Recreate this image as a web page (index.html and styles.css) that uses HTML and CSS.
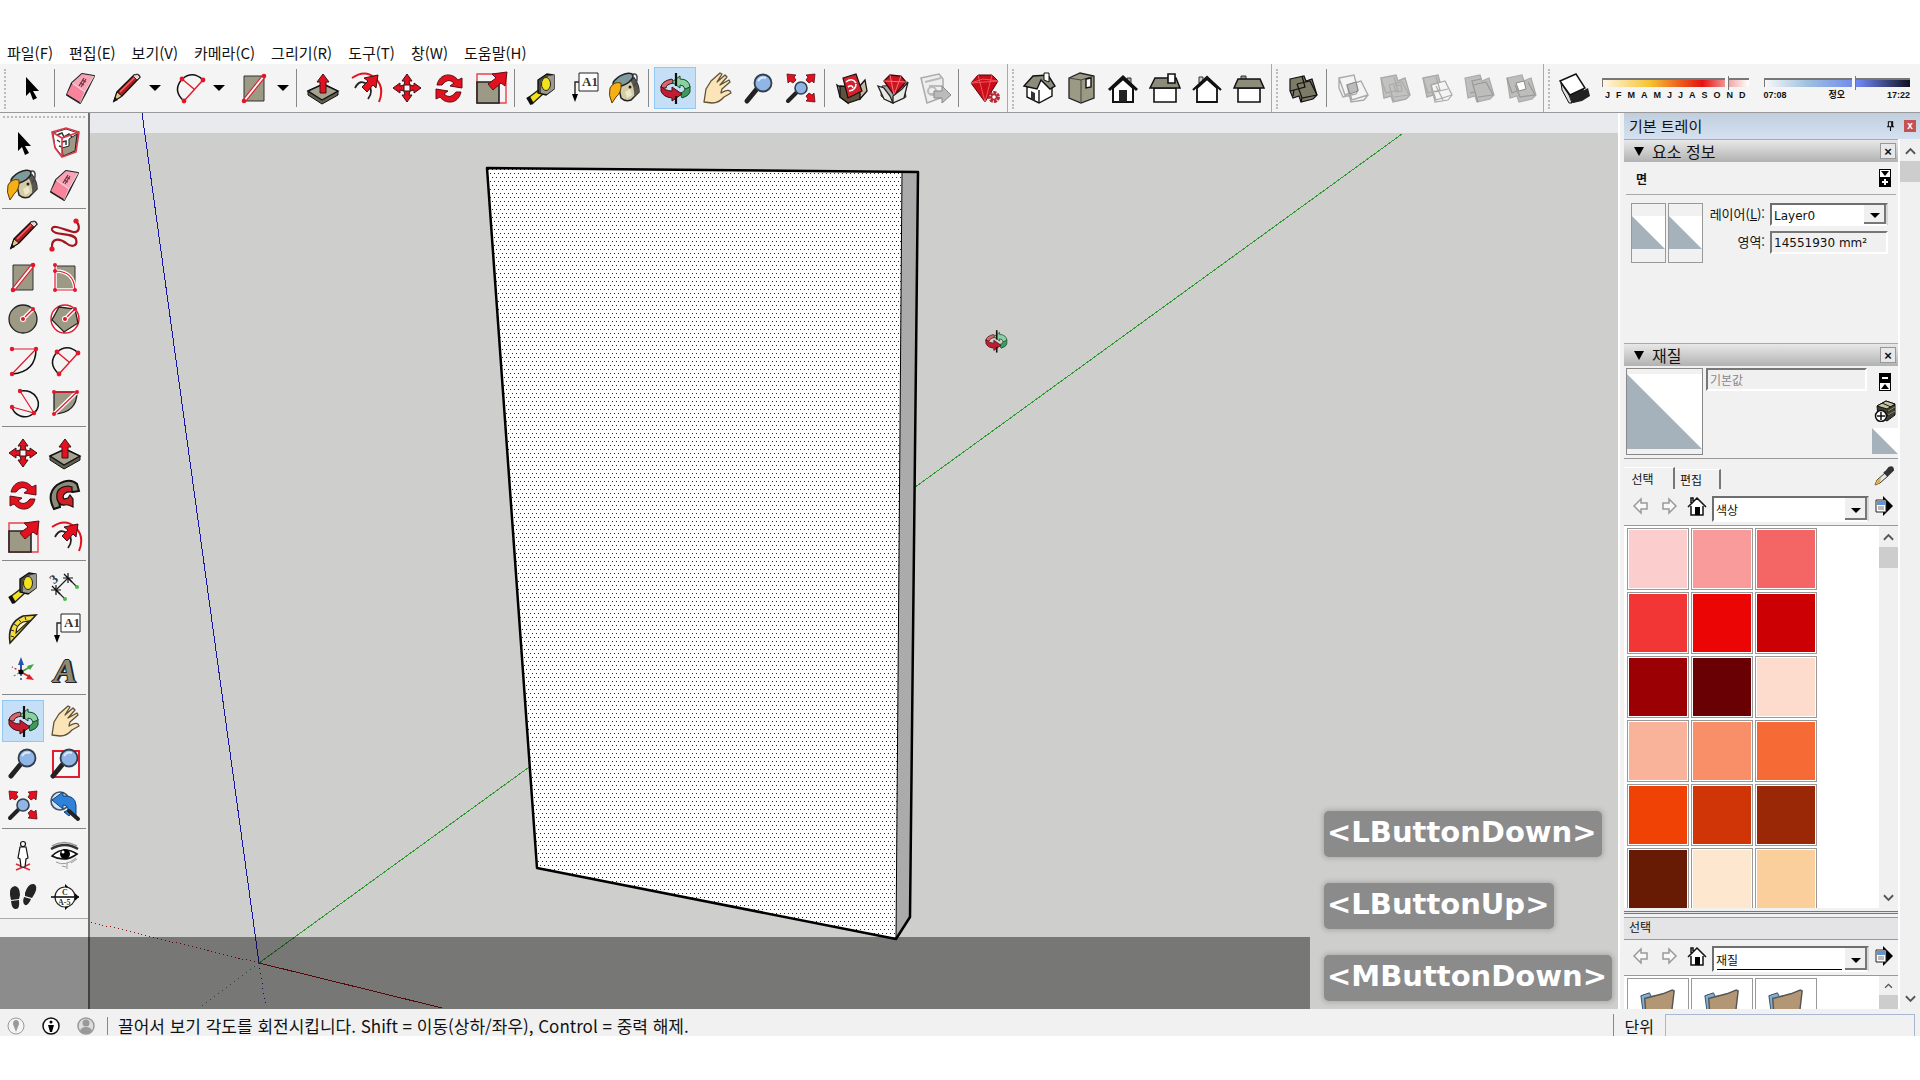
FILE: index.html
```html
<!DOCTYPE html>
<html lang="ko">
<head>
    <meta charset="UTF-8">
    <meta name="viewport" content="width=device-width, initial-scale=1.0">
    <title>SketchUp</title>
    <link rel="stylesheet" href="styles.css">
</head>
<body>

<!-- アイコン定義 -->
<svg class="icon-defs" aria-hidden="true">
    <symbol id="i-select" viewBox="0 0 36 36"><path d="M13 7v19l4-4 3 8 4-2-4-7h6z" fill="#000"/></symbol>
    <symbol id="i-component" viewBox="0 0 36 36">
        <path d="M6 8l13-4 12 4-3 18-13 5-7-9z" fill="#fff" stroke="#333"/><path d="M22 14l8-5-2 17-12 5-1-8 7-2z" fill="#9c9a84" stroke="#222"/>
        <path d="M10 10l5-2 2 4 5-3 3 3M10 15l3 2M12 21l3 1M15 17l4-1v4" stroke="#333" stroke-width="1.5" fill="none"/>
        <path d="M5 7l14-4 13 4-3 20-14 5-7-9zM5 7l10 6 17-6M15 13v19" fill="none" stroke="#d83a48" stroke-width="1.6"/>
    </symbol>
    <symbol id="i-paint" viewBox="0 0 36 36">
        <path d="M11 14L27 8q5 7 5 14l-8 8q-6 2-10-2z" fill="#d3cca9" stroke="#222" stroke-width="1.5"/>
        <path d="M23 10l4-2q5 7 5 14l-5 5q1-9-4-17z" fill="#5a584c"/>
        <path d="M18 22l5-3 2 6-5 3z" fill="#eee8c6"/>
        <path d="M23 8c2-6 8-5 7 1q0 4-3 7" fill="none" stroke="#445" stroke-width="1.5"/>
        <ellipse cx="16" cy="10" rx="11" ry="5" transform="rotate(-28 16 10)" fill="#7d9a9c" stroke="#222" stroke-width="1.5"/>
        <path d="M3 18q4-7 11-5 1 9-5 14l-4 6q-4-8-2-15z" fill="#f6b016" stroke="#5a3d00"/><circle cx="23" cy="17" r="1.500" fill="#222"/>
    </symbol>
    <symbol id="i-eraser" viewBox="0 0 36 36">
        <path d="M4 25L9 13 19 4l12 2-9 18-5 9z" fill="#f4869c" stroke="#222" stroke-width="2" stroke-linejoin="round"/>
        <path d="M9 13L19 4l12 2-9 16z" fill="#f7a5b6"/><path d="M4 24l5-10 13 8-5 10z" fill="#f8849c"/><path d="M9 13l13 9 9-16M22 22l-5 11" fill="none" stroke="#fff" stroke-opacity=".7"/>
        <path d="M16 16l5-8M18 17l5-8M17 13l4 2M19 10l4 2" stroke="#70303f" stroke-width="1.2" fill="none"/>
    </symbol>
    <symbol id="i-pencil" viewBox="0 0 36 36">
        <path d="M6 31l3-9L26 5q4-2 6 2L14 26z" fill="#bd1820" stroke="#111" stroke-width="1.4"/><path d="M12 22L27 7" stroke="#ef6b62" stroke-width="1.5"/>
        <path d="M6 31l3-9 5 4z" fill="#dfc58e" stroke="#111"/><path d="M5 32l2-5 3 3z" fill="#111"/><path d="M26 5q4-2 6 2l-3 3-4-4z" fill="#ead6d6" stroke="#333"/>
    </symbol>
    <symbol id="i-freehand" viewBox="0 0 36 36"><path d="M29 4c5 6 3 12-3 11C18 13 4 6 5 13c2 6 21 2 24 9 2 7-4 9-10 4C12 21 4 21 5 31" fill="none" stroke="#a3171f" stroke-width="2.2"/><circle cx="29" cy="4" r="2.6" fill="#e0182a"/><circle cx="5" cy="32" r="2.6" fill="#e0182a"/></symbol>
    <symbol id="i-rect" viewBox="0 0 36 36"><path d="M8 6h20v25H8z" fill="#9c9a84" stroke="#333"/><path d="M8 31L28 6" stroke="#e0182a" stroke-width="4"/><path d="M28 6L8 31" stroke="#fff" stroke-width="2"/><circle cx="28" cy="6" r="2.3" fill="#e0182a"/><circle cx="8" cy="31" r="2.3" fill="#e0182a"/></symbol>
    <symbol id="i-rrect" viewBox="0 0 36 36"><path d="M8 7h20v24H8z" fill="#9c9a84" stroke="#333"/><path d="M8 31V6M8 12q19 0 20 19H8" fill="none" stroke="#fff" stroke-width="3.500"/><path d="M8 31V6M8 12q19 0 20 19H8" fill="none" stroke="#e0182a" stroke-width="1.2"/><g fill="#e0182a"><circle cx="8" cy="6" r="2"/><circle cx="8" cy="12" r="2"/><circle cx="8" cy="31" r="2"/><circle cx="28" cy="31" r="2"/></g></symbol>
    <symbol id="i-circle" viewBox="0 0 36 36"><circle cx="18" cy="18" r="14" fill="#9c9a84" stroke="#222" stroke-width="1.3"/><path d="M18 18l10-10" stroke="#fff" stroke-width="4"/><path d="M18 18l10-10" stroke="#e0182a" stroke-width="1.4"/><circle cx="18" cy="18" r="3" fill="#fff"/><circle cx="18" cy="18" r="2" fill="#e0182a"/><circle cx="28" cy="8" r="2" fill="#e0182a"/></symbol>
    <symbol id="i-polygon" viewBox="0 0 36 36"><circle cx="18" cy="18" r="14" fill="#fff" stroke="#e0182a" stroke-width="1.4"/><path d="M12 6l16 2 3 14-14 9L5 19z" fill="#9c9a84" stroke="#222" stroke-width="1.3"/><path d="M18 18l10-10" stroke="#fff" stroke-width="4"/><path d="M18 18l10-10" stroke="#e0182a" stroke-width="1.4"/><circle cx="18" cy="18" r="3" fill="#fff"/><circle cx="18" cy="18" r="2" fill="#e0182a"/><circle cx="28" cy="8" r="2" fill="#e0182a"/></symbol>
    <symbol id="i-arc" viewBox="0 0 36 36"><path d="M31 6q0 23-24 25" fill="none" stroke="#111" stroke-width="1.5"/><path d="M7 6h24L7 31" fill="none" stroke="#e0182a" stroke-width="1.2"/><g fill="#e0182a"><circle cx="7" cy="6" r="2.2"/><circle cx="31" cy="6" r="2.2"/><circle cx="7" cy="31" r="2.2"/></g></symbol>
    <symbol id="i-arc2" viewBox="0 0 36 36"><path d="M12 31Q0 21 10 9q11-9 21 1" fill="none" stroke="#111" stroke-width="1.5"/><path d="M10 9l12 10M31 10L12 31" fill="none" stroke="#e0182a" stroke-width="1.4"/><g fill="#e0182a"><circle cx="10" cy="9" r="2.4"/><circle cx="31" cy="10" r="2.4"/><circle cx="12" cy="31" r="2.4"/></g></symbol>
    <symbol id="i-arc3" viewBox="0 0 36 36"><path d="M15 6C31 3 39 20 29 28 20 36 9 30 7 22" fill="none" stroke="#111" stroke-width="1.5"/><path d="M15 6l14 22-22-6" fill="none" stroke="#e0182a" stroke-width="1.2"/><g fill="#e0182a"><circle cx="15" cy="6" r="2.2"/><circle cx="29" cy="28" r="2.2"/><circle cx="7" cy="22" r="2.2"/></g></symbol>
    <symbol id="i-pie" viewBox="0 0 36 36"><path d="M7 7h23q0 21-23 22z" fill="#9c9a84" stroke="#222" stroke-width="1.3"/><path d="M7 29L30 7" stroke="#fff" stroke-width="4"/><path d="M7 7h23L7 29" fill="none" stroke="#e0182a" stroke-width="1.3"/><g fill="#e0182a"><circle cx="7" cy="7" r="2"/><circle cx="30" cy="7" r="2"/><circle cx="7" cy="29" r="2"/></g></symbol>
    <symbol id="i-move" viewBox="0 0 36 36"><path id="mv1" d="M18 4l5 7h-3l1 4h-6l1-4h-3z" fill="#e3101f" stroke="#401014"/><use href="#mv1" transform="rotate(90 18 18)"/><use href="#mv1" transform="rotate(180 18 18)"/><use href="#mv1" transform="rotate(270 18 18)"/></symbol>
    <symbol id="i-push" viewBox="0 0 36 36"><path d="M3 21v4l14 9 16-9v-4l-14-7z" fill="#605e50" stroke="#111"/><path d="M3 21l15-7 15 7-16 9z" fill="#a5a38e" stroke="#111" stroke-width="1.4"/><path d="M18 4l6 8h-3v11h-6V12h-3z" fill="#e3101f" stroke="#401014"/></symbol>
    <symbol id="i-rotate" viewBox="0 0 36 36"><path id="rt" d="M6 15C9 2 22 3 27 10l4-2v10l-12-2 4-3Q17 7 11 15z" fill="#e3101f" stroke="#601014"/><use href="#rt" transform="rotate(180 18 18.500)"/></symbol>
    <symbol id="i-follow" viewBox="0 0 36 36"><path d="M7 32Q-1 17 10 8q13-8 20-1l2 7-6 1q-12-6-14 8l1 7z" fill="#8d8a78" stroke="#111" stroke-width="2"/><path d="M10 22q-2-12 11-13l4 1v5q-8-1-9 5l1 2 4-1 2-3 3 4v8q-6-3-8-2-6 1-8-6z" fill="#d02027" stroke="#111" stroke-width="1.2"/></symbol>
    <symbol id="i-scale" viewBox="0 0 36 36"><path d="M4 4h29v29H4z" fill="none" stroke="#e8414e" stroke-width="1.4"/><path d="M4 12h22v21H4z" fill="#9c9a84" stroke="#222" stroke-width="1.6"/><path d="M34 2l-2 14-4-3-8 7-5-6 8-6-4-4z" fill="#e3101f" stroke="#601014"/></symbol>
    <symbol id="i-offset" viewBox="0 0 36 36"><path d="M5 8Q18-1 28 8t4 24" fill="none" stroke="#e3101f" stroke-width="2"/><path d="M8 18q5-10 13-3 6 6 0 14" fill="none" stroke="#222" stroke-width="1.8"/><path d="M31 5l-2 13-3-3-6 7-5-5 6-6-4-3z" fill="#e3101f" stroke="#401014"/></symbol>
    <symbol id="i-tape" viewBox="0 0 36 36"><path d="M5 28l12-9 4 4L9 34z" fill="#f4e31c" stroke="#222" stroke-width="1.4"/><path d="M5 27l4 7" stroke="#111" stroke-width="4"/><path d="M15 10l9-6 7 1v14l-8 6-8-2z" fill="#494941" stroke="#111" stroke-width="1.4"/><path d="M18 11l8-5 5-1v14l-7 5-6-1z" fill="#9a9a8e"/><ellipse cx="23" cy="14" rx="4.500" ry="6.500" fill="#f4e31c" stroke="#222"/></symbol>
    <symbol id="i-protractor" viewBox="0 0 36 36"><path d="M5 32Q2 12 18 5l13-1L5 32z" fill="#f4dc3c" stroke="#222" stroke-width="1.6"/><path d="M11 22q0-8 7-11l6-1z" fill="#fff8c0" stroke="#222" stroke-width="1.2"/><path d="M6 25l3 1M6 19l3 1M9 13l3 2M14 9l2 2M20 6l1 3" stroke="#222"/></symbol>
    <symbol id="i-axes" viewBox="0 0 36 36"><path d="M16 19V10" stroke="#2554a8" stroke-width="2"/><path d="M16 19l9-5" stroke="#43a547" stroke-width="2"/><path d="M16 19l9 5" stroke="#d81f26" stroke-width="2"/><path d="M16 21v8" stroke="#2554a8" stroke-width="1.5" stroke-dasharray="2 2"/><path d="M15 18l-8-4" stroke="#a33" stroke-width="1.4" stroke-dasharray="2 2"/><path d="M14 20l-7 4" stroke="#4a4" stroke-width="1.4" stroke-dasharray="2 2"/><path d="M16 4l3 8h-6z" fill="#2554a8"/><path d="M29 11l-4 6-3-4z" fill="#43a547"/><path d="M29 27l-8-1 3-5z" fill="#d81f26"/><circle cx="16" cy="19" r="2.500"/></symbol>
    <symbol id="i-orbit" viewBox="0 0 36 36">
        <path d="M4 18q0-7 11-9l2 4q-8 1-8 5z" fill="#d9686c" stroke="#401014"/>
        <path d="M33 16v6q-1 4-8 6l-2-5q5-1 5-5z" fill="#3f9a5e" stroke="#164b29"/>
        <path d="M15 12l8-6v3q9 0 10 8l-5 2q-1-4-5-4v3z" fill="#8bd0a1" stroke="#164b29"/>
        <path d="M19 3v13" stroke="#111" stroke-width="2.2"/>
        <path d="M4 16v5q2 6 11 7v3l10-7-10-7v4q-7 0-11-5z" fill="#c31c31" stroke="#401014"/>
        <path d="M19 26v8" stroke="#111" stroke-width="2.2"/>
    </symbol>
    <symbol id="i-pan" viewBox="0 0 36 36"><path d="M5 32l2-13 5-8 9-8 2 1-5 8 8-7 2 2-7 8 9-5 1 2-8 7q-1 3-1 4 6-4 9-2l1 2-7 4q-5 6-12 6z" fill="#fbe5b8" stroke="#5e5135" stroke-width="1.3" stroke-linejoin="round"/></symbol>
    <symbol id="i-zoom" viewBox="0 0 36 36"><path d="M15 20L6 31" stroke="#222" stroke-width="5" stroke-linecap="round"/><circle cx="22" cy="13" r="8.500" fill="#90b6e6" stroke="#333e4c" stroke-width="1.800"/><path d="M17 11q3-5 8-3" stroke="#d8e9fb" stroke-width="2" fill="none"/></symbol>
    <symbol id="i-zoomwin" viewBox="0 0 36 36"><path d="M6 6h26v26H6z" fill="#fff" fill-opacity=".4" stroke="#df1f31" stroke-width="2"/><use href="#i-zoom" width="36" height="36"/></symbol>
    <symbol id="i-extents" viewBox="0 0 36 36"><path d="M13 23l-8 8" stroke="#222" stroke-width="4" stroke-linecap="round"/><circle cx="18" cy="18" r="6" fill="#90b6e6" stroke="#333e4c" stroke-width="1.6"/><g fill="#e3101f" stroke="#601014" stroke-width=".8"><path d="M4 4l9 1-2 2 2 3-3 3-3-2-2 2z"/><path d="M32 4l-9 1 2 2-2 3 3 3 3-2 2 2z"/><path d="M32 32l-9-1 2-2-2-3 3-3 3 2 2-2z"/></g></symbol>
    <symbol id="i-prev" viewBox="0 0 36 36"><circle cx="13" cy="14" r="9" fill="#d2e4f6" stroke="#456" stroke-width="1.600"/><path d="M5 13l11-8v4q12-1 13 9v12l-5-4-2 3-5-4 4-2q0-5-5-5v4z" fill="#2f82d8" stroke="#143e70"/><path d="M22 24l9 8" stroke="#222" stroke-width="4" stroke-linecap="round"/></symbol>
    <symbol id="i-camera" viewBox="0 0 36 36"><path d="M11 27l14 6M25 27l-14 6" stroke="#df2a3a" stroke-width="1.800"/><circle cx="18" cy="7" r="2.500" fill="#fff" stroke="#111" stroke-width="1.2"/><path d="M15 10h6l2 11-2 1-1 8h-4l-1-8-2-1z" fill="#fff" stroke="#111" stroke-width="1.2"/></symbol>
    <symbol id="i-eye" viewBox="0 0 36 36"><path d="M5 19Q16 8 30 17 18 26 5 19z" fill="#fff" stroke="#111" stroke-width="1.600"/><path d="M4 12Q18 4 31 12" fill="none" stroke="#333" stroke-width="2.400"/><path d="M5 9q12-7 25 0" fill="none" stroke="#999" stroke-width="1.500"/><circle cx="18" cy="17" r="5"/><circle cx="16" cy="15" r="1.500" fill="#fff"/><path d="M9 25q9 5 20-4M15 29l4 1M24 26l6-4M20 26v6" stroke="#999" fill="none"/></symbol>
    <symbol id="i-walk" viewBox="0 0 36 36"><path d="M5 16Q4 8 10 7q5 1 5 9l-1 4-8 1zM6 22l8-1q1 9-3 9-4 1-5-8zM20 14q3-10 9-9 4 2 1 9l-3 5-7-2zM19 18l7 2q-3 7-6 6-3-2-1-8z" fill="#242424"/></symbol>
    <symbol id="i-warehouse" viewBox="0 0 36 36"><path d="M4 15l8 5 3 13-8-6zM32 10l-7 8 2 11 7-8z" fill="#c8b9a4" stroke="#111" stroke-width="1.3"/><path d="M7 16l20 1v12l-12 4-8-6z" fill="#60503e" stroke="#111" stroke-width="1.3"/><path d="M10 8l13-4 6 17-14 7z" fill="#d5222c" stroke="#111" stroke-width="1.2"/><path d="M13 12q6-5 10 1M16 21q7-1 7-7M15 17q4-3 5 1" fill="none" stroke="#fff" stroke-width="1.600"/></symbol>
    <symbol id="i-extwh" viewBox="0 0 36 36"><path d="M7 16l22-1 2 12-14 6-11-7z" fill="#aaa" stroke="#222"/><path d="M9 11l6-6 11 1 5 6-12 13z" fill="#cd1522" stroke="#450409" stroke-width="1.3"/><path d="M9 11l22 1M15 5l4 20 7-19" stroke="#f3757a" fill="none"/><path d="M3 16l6 2 6 8 3 7-9-4zM33 12l-6 7-9 7v7l11-5z" fill="#e9e9e4" stroke="#222" stroke-width="1.300"/></symbol>
    <symbol id="i-layout" viewBox="0 0 36 36"><path d="M4 8l18-4 4 5v18l-16 6z" fill="#eee" stroke="#aaa" stroke-width="1.5"/><path d="M8 12l16-4M12 16h13M12 24h12" stroke="#bbb" stroke-width="2"/><circle cx="15" cy="21" r="4" fill="none" stroke="#bbb" stroke-width="2"/><path d="M17 21h8v-5l9 9-9 8v-5h-8z" fill="#bbb" stroke="#888"/></symbol>
    <symbol id="i-ruby" viewBox="0 0 36 36"><path d="M4 13l7-8h14l6 6-13 21z" fill="#c90d19" stroke="#590309"/><path d="M4 13l27-2M11 5l7 27 7-27M4 13l12-4 15 2" stroke="#f0555c" fill="none"/><circle cx="27" cy="27" r="4.500" fill="#f2d5d7" stroke="#b22c38" stroke-width="3" stroke-dasharray="3 1"/><circle cx="27" cy="27" r="2.500" fill="#fff" stroke="#b22c38" stroke-width="1.500"/></symbol>
    <symbol id="i-iso" viewBox="0 0 36 36"><path d="M6 17v10l12 6 13-7V15l-8-6z" fill="#fff" stroke="#111" stroke-width="1.4"/><path d="M10 29v-8l4 2v8z" fill="#333"/><path d="M18 20v13" stroke="#111" stroke-width="1.400"/><path d="M3 16l9-10 15-1 7 11-5 3-9-9-4 9z" fill="#8d8b7a" stroke="#111" stroke-width="1.4"/><path d="M23 3h5v9l-5-2z" fill="#fff" stroke="#111"/></symbol>
    <symbol id="i-topv" viewBox="0 0 36 36"><path d="M6 8l11-5 14 3v22l-13 5-12-5z" fill="#9c9a84" stroke="#222" stroke-width="1.3"/><path d="M6 8l12 2 13-4M18 10v23" fill="none" stroke="#444"/><path d="M23 9l5-1v9l-5 1z" fill="#fff" stroke="#111" stroke-width="1.4"/></symbol>
    <symbol id="i-front" viewBox="0 0 36 36"><path d="M22 8h4v6h-4z" fill="#aaa" stroke="#333"/><path d="M8 18v14h20V18L18 9z" fill="#fff" stroke="#111" stroke-width="2"/><path d="M4 20L18 7l14 13" fill="none" stroke="#111" stroke-width="3"/><path d="M14 20h8v12h-8z" fill="#222"/></symbol>
    <symbol id="i-rightv" viewBox="0 0 36 36"><path d="M7 18h22v14H7z" fill="#fff" stroke="#111" stroke-width="1.6"/><path d="M8 8h21l4 10H3z" fill="#8d8b7a" stroke="#111" stroke-width="1.5"/><path d="M21 4h7v9h-7z" fill="#fff" stroke="#111" stroke-width="1.6"/></symbol>
    <symbol id="i-back" viewBox="0 0 36 36"><path d="M10 7h4v6h-4z" fill="#ccc" stroke="#333"/><path d="M8 18v14h20V18L18 9z" fill="#fff" stroke="#111" stroke-width="1.800"/><path d="M4 20L18 7l14 13" fill="none" stroke="#111" stroke-width="2.200"/></symbol>
    <symbol id="i-leftv" viewBox="0 0 36 36"><path d="M7 18h22v14H7z" fill="#fff" stroke="#111" stroke-width="1.600"/><path d="M10 6h5v4h-5z" fill="#999" stroke="#333"/><path d="M7 9h22l4 9H3z" fill="#8d8b7a" stroke="#111" stroke-width="1.500"/></symbol>
    <symbol id="i-shell" viewBox="0 0 36 36"><path d="M5 9l14-3 2 5 6-2 5 16-4 4-12 3-2-6-6 2-3-7z" fill="#7d7a67" stroke="#111" stroke-width="1.200"/><path d="M5 21l4-1 11-3-3-11M12 14l13-3 7 14M12 14l5 14 15-3M17 28l-1 4M9 20l-1 6" stroke="#111" fill="none" stroke-width="1.200"/></symbol>
    <symbol id="i-solid1" viewBox="0 0 36 36"><path d="M4 8l15-3 4 15-13 5zM4 8v10l4 9 13-3 2-4M12 15l14-4 7 14-16 5zM12 15l4 17 13-2 4-5" fill="none" stroke="#aaa" stroke-width="1.400"/><path d="M12 15l9-3 2 9-8 3z" fill="#bbb" stroke="#888"/></symbol>
    <symbol id="i-solid2" viewBox="0 0 36 36"><path d="M4 8l15-3 2 6 7-3 5 17-4 4-13 3-2-6-7 2z" fill="#c2c2c0" stroke="#aaa" stroke-width="1.400"/><path d="M4 8l5 15 12-3-4-13M12 15l13-3 7 13M12 15l5 17M17 27l15-2M17 16l7-1 1 6-6 1z" stroke="#aaa" fill="none" stroke-width="1.200"/></symbol>
    <symbol id="i-solid3" viewBox="0 0 36 36"><path d="M4 8l15-3 2 7-9 3 2 10-6 2z" fill="#c2c2c0" stroke="#aaa" stroke-width="1.400"/><path d="M4 8l5 15 12-3-4-13M12 15l14-4 7 14-16 5zM12 15l4 17 13-2 4-5M17 16l7 14M16 22l13-3" stroke="#aaa" fill="none" stroke-width="1.200"/></symbol>
    <symbol id="i-solid4" viewBox="0 0 36 36"><path d="M4 8l15-3 2 6 7-3 5 17-4 4-13 3-2-6-7 2z" fill="#bdbdbb" stroke="#aaa" stroke-width="1.200"/><path d="M9 23l5-1-3-11 9-2M12 15l13-3 7 13M12 15l5 17M17 27l15-2" stroke="#999" fill="none" stroke-width="1.200"/></symbol>
    <symbol id="i-solid5" viewBox="0 0 36 36"><path d="M4 8l15-3 2 6 7-3 5 17-4 4-13 3-2-6-7 2z" fill="#bdbdbb" stroke="#aaa" stroke-width="1.200"/><path d="M4 8l5 15 5-2M25 12l7 13-15 2-5-12" stroke="#999" fill="none" stroke-width="1.200"/><path d="M13 13l8-2 2 8-7 2z" fill="#fff" stroke="#888"/></symbol>
    <symbol id="i-shadow" viewBox="0 0 36 36"><path d="M14 27l17-9 2 8-8 5-9 2z" fill="#222"/><path d="M4 13l8 12 3 8h-3L5 20z" fill="#ddd" stroke="#111"/><path d="M12 24l15-6-1 12-11 3z" fill="#222"/><path d="M3 11L19 4l9 14-15 7z" fill="#fff" stroke="#111" stroke-width="1.400"/></symbol>
    <symbol id="i-left" viewBox="0 0 20 20"><path d="M3 10l7-7v4h6v6h-6v4z" fill="#f8f8f8" stroke="#999" stroke-width="1.500"/></symbol>
    <symbol id="i-right" viewBox="0 0 20 20"><path d="M17 10l-7-7v4H4v6h6v4z" fill="#f8f8f8" stroke="#999" stroke-width="1.500"/></symbol>
    <symbol id="i-home" viewBox="0 0 20 20"><path d="M4 10l6-7 6 7v9H4z" fill="#fff"/><path d="M1 11l9-9 9 9M4 10v9h12v-9M4 7V2h2v3" fill="none" stroke="#111" stroke-width="1.500"/><path d="M8 11h5v8H8z"/></symbol>
    <symbol id="i-details" viewBox="0 0 20 20"><path d="M9 0l10 10-10 10z"/><path d="M2 4h10v12H2z" fill="#fff" stroke="#222"/><path d="M3 5h8v4H3z" fill="#5e93d4"/><path d="M4 11h6M4 13h6" stroke="#777"/></symbol>
    <symbol id="i-dropper" viewBox="0 0 20 20"><path d="M1 19l2-5 8-7 3 3-8 7z" fill="#e8e8e8" stroke="#333"/><path d="M1 19l2-5 4-2-1 5z" fill="#e0b148"/><path d="M10 6l4 4M11 7l4-5q4-2 4 2l-5 5z" fill="#333" stroke="#333" stroke-width="2"/></symbol>
    <symbol id="i-create" viewBox="0 0 22 22"><path d="M3 6l9-5 9 3v11l-8 6-9-5z" fill="#403e32" stroke="#111"/><path d="M3 6l9-5 9 3-8 5z" fill="#c5c39c" stroke="#111"/><path d="M8 3l9 4M13 12l8-5M13 16l8-5" stroke="#111"/><path d="M14 11l7-4M14 15l7-4" stroke="#918e72"/><circle cx="7" cy="16" r="5.500" fill="#fff" stroke="#111" stroke-width="1.500"/><path d="M3 16h8M7 12v8" stroke="#111" stroke-width="1.500"/></symbol>
    <symbol id="i-expand" viewBox="0 0 12 18"><path d="M0 0h12v18H0z"/><path d="M1 1h10v7H1z" fill="#fff"/><path d="M6 10v6M3 13h6" stroke="#fff" stroke-width="2"/><path d="M2 2h8L6 7z"/></symbol>
    <symbol id="i-collapse" viewBox="0 0 12 18"><path d="M0 0h12v18H0z"/><path d="M1 10h10v7H1z" fill="#fff"/><path d="M2 16h8l-4-5z"/><path d="M3 5h6" stroke="#fff" stroke-width="2"/></symbol>
    <symbol id="i-folder" viewBox="0 0 40 40"><path d="M2 6l9-3 2 4 4-1v30H6z" fill="#79b0d3" stroke="#445"/><path d="M6 9l19-5 10-4 2 1-4 34H8z" fill="#b39673" stroke="#555" stroke-width="1.500"/></symbol>
    <symbol id="i-pin" viewBox="0 0 12 14"><path d="M3 1h6v7H3zM1 8h10M6 8v6" fill="none" stroke="#111" stroke-width="1.500"/><path d="M7 1h2v7H7z"/></symbol>
    <symbol id="i-up" viewBox="0 0 12 8"><path d="M1 7l5-5 5 5" fill="none" stroke="#555" stroke-width="2"/></symbol>
    <symbol id="i-down" viewBox="0 0 12 8"><path d="M1 1l5 5 5-5" fill="none" stroke="#555" stroke-width="2"/></symbol>
</svg>

<nav class="menu-bar">
    <a href="#">파일(F)</a>
    <a href="#">편집(E)</a>
    <a href="#">보기(V)</a>
    <a href="#">카메라(C)</a>
    <a href="#">그리기(R)</a>
    <a href="#">도구(T)</a>
    <a href="#">창(W)</a>
    <a href="#">도움말(H)</a>
</nav>

<header class="toolbar">
    <div class="tool-group">
        <button class="tool" aria-label="선택"><svg><use href="#i-select"/></svg></button>
        <span class="sep"></span>
        <button class="tool" aria-label="지우개"><svg><use href="#i-eraser"/></svg></button>
        <div class="split"><button class="tool" aria-label="선"><svg><use href="#i-pencil"/></svg></button><button class="caret" aria-label="선 도구"></button></div>
        <div class="split"><button class="tool" aria-label="호"><svg><use href="#i-arc2"/></svg></button><button class="caret" aria-label="호 도구"></button></div>
        <div class="split"><button class="tool" aria-label="도형"><svg><use href="#i-rect"/></svg></button><button class="caret" aria-label="도형 도구"></button></div>
        <span class="sep"></span>
        <button class="tool" aria-label="밀기/끌기"><svg><use href="#i-push"/></svg></button>
        <button class="tool" aria-label="오프셋"><svg><use href="#i-offset"/></svg></button>
        <button class="tool" aria-label="이동"><svg><use href="#i-move"/></svg></button>
        <button class="tool" aria-label="회전"><svg><use href="#i-rotate"/></svg></button>
        <button class="tool" aria-label="배율"><svg><use href="#i-scale"/></svg></button>
        <span class="sep"></span>
        <button class="tool" aria-label="줄자"><svg><use href="#i-tape"/></svg></button>
        <button class="tool" aria-label="텍스트"><svg viewBox="0 0 36 36"><path d="M14 3h19v18H14z" fill="#fff" stroke="#222"/><path d="M14 12h-4v14" fill="none" stroke="#222" stroke-width="1.4"/><path d="M10 32l-3-8h6z"/><text class="icon-text" x="17" y="16">A1</text></svg></button>
        <button class="tool" aria-label="페인트통"><svg><use href="#i-paint"/></svg></button>
        <span class="sep"></span>
        <button class="tool active" aria-label="궤도"><svg><use href="#i-orbit"/></svg></button>
        <button class="tool" aria-label="이동 보기"><svg><use href="#i-pan"/></svg></button>
        <button class="tool" aria-label="확대/축소"><svg><use href="#i-zoom"/></svg></button>
        <button class="tool" aria-label="범위 확대"><svg><use href="#i-extents"/></svg></button>
        <span class="sep"></span>
        <button class="tool" aria-label="3D Warehouse"><svg><use href="#i-warehouse"/></svg></button>
        <button class="tool" aria-label="Extension Warehouse"><svg><use href="#i-extwh"/></svg></button>
        <button class="tool" aria-label="LayOut"><svg><use href="#i-layout"/></svg></button>
        <span class="sep"></span>
        <button class="tool" aria-label="확장 관리자"><svg><use href="#i-ruby"/></svg></button>
    </div>
    <div class="tool-group">
        <button class="tool" aria-label="등각"><svg><use href="#i-iso"/></svg></button>
        <button class="tool" aria-label="위"><svg><use href="#i-topv"/></svg></button>
        <button class="tool" aria-label="앞"><svg><use href="#i-front"/></svg></button>
        <button class="tool" aria-label="오른쪽"><svg><use href="#i-rightv"/></svg></button>
        <button class="tool" aria-label="뒤"><svg><use href="#i-back"/></svg></button>
        <button class="tool" aria-label="왼쪽"><svg><use href="#i-leftv"/></svg></button>
    </div>
    <div class="tool-group">
        <button class="tool" aria-label="외부 셸"><svg><use href="#i-shell"/></svg></button>
        <span class="sep"></span>
        <button class="tool" aria-label="교차"><svg><use href="#i-solid1"/></svg></button>
        <button class="tool" aria-label="결합"><svg><use href="#i-solid2"/></svg></button>
        <button class="tool" aria-label="빼기"><svg><use href="#i-solid3"/></svg></button>
        <button class="tool" aria-label="트림"><svg><use href="#i-solid4"/></svg></button>
        <button class="tool" aria-label="분할"><svg><use href="#i-solid5"/></svg></button>
    </div>
    <div class="tool-group shadows">
        <button class="tool" aria-label="그림자"><svg><use href="#i-shadow"/></svg></button>
        <div class="slider">
            <input class="range-date" type="range" min="0" max="100" value="86" aria-label="날짜">
            <div class="scale months"><span>J</span><span>F</span><span>M</span><span>A</span><span>M</span><span>J</span><span>J</span><span>A</span><span>S</span><span>O</span><span>N</span><span>D</span></div>
        </div>
        <div class="slider">
            <input class="range-time" type="range" min="0" max="100" value="62" aria-label="시간">
            <div class="scale"><span>07:08</span><span>정오</span><span>17:22</span></div>
        </div>
    </div>
</header>

<main class="workspace">
    <aside class="palette">
        <div class="palette-group">
            <button class="tool" aria-label="선택"><svg><use href="#i-select"/></svg></button>
            <button class="tool" aria-label="구성요소"><svg><use href="#i-component"/></svg></button>
            <button class="tool" aria-label="페인트통"><svg><use href="#i-paint"/></svg></button>
            <button class="tool" aria-label="지우개"><svg><use href="#i-eraser"/></svg></button>
        </div>
        <div class="palette-group">
            <button class="tool" aria-label="선"><svg><use href="#i-pencil"/></svg></button>
            <button class="tool" aria-label="자유형"><svg><use href="#i-freehand"/></svg></button>
            <button class="tool" aria-label="직사각형"><svg><use href="#i-rect"/></svg></button>
            <button class="tool" aria-label="회전된 직사각형"><svg><use href="#i-rrect"/></svg></button>
            <button class="tool" aria-label="원"><svg><use href="#i-circle"/></svg></button>
            <button class="tool" aria-label="다각형"><svg><use href="#i-polygon"/></svg></button>
            <button class="tool" aria-label="호"><svg><use href="#i-arc"/></svg></button>
            <button class="tool" aria-label="2점 호"><svg><use href="#i-arc2"/></svg></button>
            <button class="tool" aria-label="3점 호"><svg><use href="#i-arc3"/></svg></button>
            <button class="tool" aria-label="파이"><svg><use href="#i-pie"/></svg></button>
        </div>
        <div class="palette-group">
            <button class="tool" aria-label="이동"><svg><use href="#i-move"/></svg></button>
            <button class="tool" aria-label="밀기/끌기"><svg><use href="#i-push"/></svg></button>
            <button class="tool" aria-label="회전"><svg><use href="#i-rotate"/></svg></button>
            <button class="tool" aria-label="따라가기"><svg><use href="#i-follow"/></svg></button>
            <button class="tool" aria-label="배율"><svg><use href="#i-scale"/></svg></button>
            <button class="tool" aria-label="오프셋"><svg><use href="#i-offset"/></svg></button>
        </div>
        <div class="palette-group">
            <button class="tool" aria-label="줄자"><svg><use href="#i-tape"/></svg></button>
            <button class="tool" aria-label="치수"><svg viewBox="0 0 36 36"><path d="M9 21L21 9M21 9l9 9M9 21l9 9" stroke="#222" stroke-width="1.2"/><path d="M16 9h10M21 4v10M17 5l8 8M4 21h10M9 16v10M5 17l8 8" stroke="#111" stroke-width="1.2"/><circle cx="30" cy="18" r="2" fill="#4bb849"/><circle cx="18" cy="30" r="2" fill="#4bb849"/><text class="icon-text" x="4" y="13" transform="rotate(-40 9 10)">3</text></svg></button>
            <button class="tool" aria-label="각도기"><svg><use href="#i-protractor"/></svg></button>
            <button class="tool" aria-label="텍스트"><svg viewBox="0 0 36 36"><path d="M14 3h19v18H14z" fill="#fff" stroke="#222"/><path d="M14 12h-4v14" fill="none" stroke="#222" stroke-width="1.4"/><path d="M10 32l-3-8h6z"/><text class="icon-text" x="17" y="16">A1</text></svg></button>
            <button class="tool" aria-label="축"><svg><use href="#i-axes"/></svg></button>
            <button class="tool letter" aria-label="3D 텍스트">A</button>
        </div>
        <div class="palette-group">
            <button class="tool active" aria-label="궤도"><svg><use href="#i-orbit"/></svg></button>
            <button class="tool" aria-label="이동 보기"><svg><use href="#i-pan"/></svg></button>
            <button class="tool" aria-label="확대/축소"><svg><use href="#i-zoom"/></svg></button>
            <button class="tool" aria-label="창 확대"><svg><use href="#i-zoomwin"/></svg></button>
            <button class="tool" aria-label="범위 확대"><svg><use href="#i-extents"/></svg></button>
            <button class="tool" aria-label="이전"><svg><use href="#i-prev"/></svg></button>
        </div>
        <div class="palette-group">
            <button class="tool" aria-label="카메라 배치"><svg><use href="#i-camera"/></svg></button>
            <button class="tool" aria-label="둘러보기"><svg><use href="#i-eye"/></svg></button>
            <button class="tool" aria-label="걷기"><svg><use href="#i-walk"/></svg></button>
            <button class="tool" aria-label="단면"><svg viewBox="0 0 36 36"><path d="M18 5l14 13-14 13z"/><circle cx="18" cy="18" r="10" fill="#fff" stroke="#222" stroke-width="1.2"/><path d="M4 18h28" stroke="#111" stroke-width="1.600"/><text class="icon-text small" x="15" y="16">C</text><text class="icon-text small" x="11" y="26">A-5</text></svg></button>
        </div>
    </aside>

    <section class="viewport">
        <svg class="scene" viewBox="90 113 1528 896" preserveAspectRatio="xMinYMin slice">
            <defs>
                <pattern id="dots" width="4" height="8" patternUnits="userSpaceOnUse">
                    <path d="M0 0h4v8H0z" fill="#fff"/><path d="M0 1h1v1H0zM2 5h1v1H2z" fill="#222"/>
                </pattern>
            </defs>
            <path d="M90 113h1528v20H90z" fill="#e8eaed"/>
            <path d="M90 133h1528v876H90z" fill="#cececc"/>
            <!-- 軸 -->
            <g fill="none" shape-rendering="crispEdges">
                <path d="M142 113l117 850" stroke="#1616a8"/>
                <path d="M259 963L1402 134" stroke="#2c9a2c"/>
                <path d="M259 963l183 45" stroke="#8c1010"/>
                <path d="M259 963L90 922" stroke="#8c1010" stroke-dasharray="1 3"/>
                <path d="M259 963l-59 45" stroke="#557755" stroke-dasharray="1 4"/>
                <path d="M259 963l7 45" stroke="#1616a8" stroke-dasharray="1 4"/>
            </g>
            <!-- 直方体 -->
            <path d="M902 171l16 1-8 745-14 22z" fill="#ababab"/>
            <path d="M487 168l415 3-6 768-359-71z" fill="url(#dots)"/>
            <path d="M902 171l-6 768" stroke="#000" stroke-width="1"/>
            <path d="M487 168l431 4-8 745-14 22-359-71z" fill="none" stroke="#000" stroke-width="2.500" stroke-linejoin="round"/>
            <use href="#i-orbit" x="983" y="328" width="26" height="26"/>
        </svg>
        <div class="keys">
            <kbd>&lt;LButtonDown&gt;</kbd>
            <kbd>&lt;LButtonUp&gt;</kbd>
            <kbd>&lt;MButtonDown&gt;</kbd>
        </div>
    </section>

    <aside class="tray">
        <header class="tray-title">
            <h1>기본 트레이</h1>
            <button class="pin" aria-label="고정"><svg><use href="#i-pin"/></svg></button>
            <button class="close" aria-label="닫기">x</button>
        </header>
        <div class="tray-body">
            <div class="panels">
                <h2 class="panel-head"><span class="tri"></span>요소 정보<button aria-label="패널 닫기">×</button></h2>
                <div class="entity">
                    <div class="entity-top"><strong>면</strong><button class="mini" aria-label="세부 정보"><svg><use href="#i-expand"/></svg></button></div>
                    <div class="entity-main">
                        <span class="thumb"></span>
                        <span class="thumb"></span>
                        <div class="fields">
                            <label for="layer">레이어(<u>L</u>):</label>
                            <span class="combo"><select id="layer"><option>Layer0</option></select></span>
                            <label for="area">영역:</label>
                            <input id="area" type="text" value="14551930 mm²" readonly>
                        </div>
                    </div>
                </div>

                <h2 class="panel-head"><span class="tri"></span>재질<button aria-label="패널 닫기">×</button></h2>
                <div class="material">
                    <span class="preview"></span>
                    <input type="text" value="기본값" aria-label="재질 이름" disabled>
                    <div class="material-side">
                        <button class="mini" aria-label="보조 창"><svg><use href="#i-collapse"/></svg></button>
                        <button class="create" aria-label="재질 만들기"><svg><use href="#i-create"/></svg></button>
                        <span class="default"></span>
                    </div>
                </div>
                <div class="tabs">
                    <button class="tab selected">선택</button>
                    <button class="tab">편집</button>
                    <button class="dropper" aria-label="샘플 페인트"><svg><use href="#i-dropper"/></svg></button>
                </div>
                <div class="browse">
                    <button aria-label="뒤로"><svg><use href="#i-left"/></svg></button>
                    <button aria-label="앞으로"><svg><use href="#i-right"/></svg></button>
                    <button aria-label="모델 내"><svg><use href="#i-home"/></svg></button>
                    <span class="combo"><select aria-label="컬렉션"><option>색상</option></select></span>
                    <button aria-label="세부 정보"><svg><use href="#i-details"/></svg></button>
                </div>
                <div class="list">
                    <div class="swatches">
                        <button class="red-1" aria-label="색상 A01"></button><button class="red-2" aria-label="색상 A02"></button><button class="red-3" aria-label="색상 A03"></button>
                        <button class="red-4" aria-label="색상 A04"></button><button class="red-5" aria-label="색상 A05"></button><button class="red-6" aria-label="색상 A06"></button>
                        <button class="red-7" aria-label="색상 A07"></button><button class="red-8" aria-label="색상 A08"></button><button class="orange-1" aria-label="색상 B01"></button>
                        <button class="orange-2" aria-label="색상 B02"></button><button class="orange-3" aria-label="색상 B03"></button><button class="orange-4" aria-label="색상 B04"></button>
                        <button class="orange-5" aria-label="색상 B05"></button><button class="orange-6" aria-label="색상 B06"></button><button class="orange-7" aria-label="색상 B07"></button>
                        <button class="orange-8" aria-label="색상 B08"></button><button class="sand-1" aria-label="색상 C01"></button><button class="sand-2" aria-label="색상 C02"></button>
                    </div>
                    <div class="scrollbar"><svg><use href="#i-up"/></svg><span class="knob"></span><svg class="end"><use href="#i-down"/></svg></div>
                </div>

                <h3 class="sub-head">선택</h3>
                <div class="browse">
                    <button aria-label="뒤로"><svg><use href="#i-left"/></svg></button>
                    <button aria-label="앞으로"><svg><use href="#i-right"/></svg></button>
                    <button aria-label="모델 내"><svg><use href="#i-home"/></svg></button>
                    <span class="combo underline"><select aria-label="보조 컬렉션"><option>재질</option></select></span>
                    <button aria-label="세부 정보"><svg><use href="#i-details"/></svg></button>
                </div>
                <div class="list short">
                    <div class="swatches">
                        <button class="folder" aria-label="폴더 1"><svg><use href="#i-folder"/></svg></button><button class="folder" aria-label="폴더 2"><svg><use href="#i-folder"/></svg></button><button class="folder" aria-label="폴더 3"><svg><use href="#i-folder"/></svg></button>
                    </div>
                    <div class="scrollbar"><svg><use href="#i-up"/></svg><span class="knob"></span></div>
                </div>
            </div>
            <div class="scrollbar outer"><svg><use href="#i-up"/></svg><span class="knob"></span><svg class="end"><use href="#i-down"/></svg></div>
        </div>
    </aside>
    <div class="caption-strip"></div>
</main>

<footer class="status-bar">
    <svg class="status-icon" viewBox="0 0 18 18"><circle cx="9" cy="9" r="8" fill="#f4f4f4" stroke="#999"/><path d="M9 15L6 7q0-4 3-4t3 4z" fill="#999"/></svg>
    <svg class="status-icon" viewBox="0 0 18 18"><circle cx="9" cy="9" r="8" fill="#fff" stroke="#111" stroke-width="1.5"/><circle cx="9" cy="5" r="1.500"/><path d="M6 8h6l-2 7H8z"/></svg>
    <svg class="status-icon" viewBox="0 0 18 18"><circle cx="9" cy="9" r="8" fill="#ddd" stroke="#999" stroke-width="1.5"/><circle cx="9" cy="6" r="3.500" fill="#999"/><path d="M3 14q1-4 6-4t6 4q-6 5-12 0z" fill="#999"/></svg>
    <p>끌어서 보기 각도를 회전시킵니다. Shift = 이동(상하/좌우), Control = 중력 해제.</p>
    <div class="measure">
        <label for="units">단위</label>
        <input id="units" type="text">
    </div>
</footer>

</body>
</html>
```

FILE: styles.css
```css
:root {
    --face: #f1f1f1;
    --line: #999;
    --dark: #6e6e6e;
    --slate: #a5b2bb;
}

* {
    box-sizing: border-box;
}

body {
    margin: 0;
    height: 100vh;
    padding-bottom: 44px;
    display: flex;
    flex-direction: column;
    overflow: hidden;
    background: #fff;
    color: #111;
    font-family: "Noto Sans CJK KR", sans-serif;
    font-size: 12px;
}

button, input, select {
    font: inherit;
    color: inherit;
}

button {
    padding: 0;
    border: 0;
    background: none;
}

h1, h2, h3, p {
    margin: 0;
    font-weight: normal;
}

.icon-defs {
    position: absolute;
    width: 0;
    height: 0;
}

/* メニュー */
.menu-bar {
    height: 64px;
    padding: 42px 7px 0;
    display: flex;
    gap: 16px;
    font-size: 15px;
    line-height: 22px;
}

.menu-bar a {
    color: #111;
    text-decoration: none;
}

/* ツールバー */
.toolbar {
    height: 49px;
    flex: none;
    display: flex;
    background: #f4f4f4;
    border-bottom: 1px solid var(--line);
}

.tool-group {
    position: relative;
    display: flex;
    align-items: center;
    padding: 0 1px 0 10px;
    border-right: 1px solid #aaa;
}

.tool-group::before {
    content: '';
    position: absolute;
    left: 4px;
    top: 5px;
    bottom: 3px;
    border-left: 2px dotted #bbb;
}

.tool {
    width: 42px;
    height: 42px;
    flex: none;
    display: grid;
    place-items: center;
}

.tool svg {
    width: 36px;
    height: 36px;
}

.tool.active {
    background: #c4dff6;
    border: 1px solid #90c8f6;
}

.icon-text {
    font: bold 13px "Liberation Serif", serif;
    fill: #333;
}

.icon-text.small {
    font-size: 8px;
}

/* 3D テキスト */
.letter {
    color: #8d8a78;
    font: italic bold 34px/40px "Liberation Serif", serif;
    text-shadow: 1px 0 #222, -1px 0 #222, 0 1px #222, 0 -1px #222, 2px 1px #222;
}

.sep {
    width: 1px;
    height: 38px;
    margin: 0 5px 0 2px;
    background: #888;
}

.split {
    display: flex;
    padding: 0 3px;
}

.caret {
    width: 16px;
}

.caret::before {
    content: '';
    display: block;
    margin: 0 auto;
    width: 0;
    border: 6px solid transparent;
    border-top-color: #000;
    border-bottom: 0;
}

.shadows {
    flex: 1;
    gap: 6px;
    padding-right: 10px;
    border-right: 0;
}

.slider {
    flex: 1;
    padding-top: 2px;
}

.slider + .slider {
    margin-left: 9px;
}

.slider input {
    display: block;
    width: 100%;
    height: 12px;
    margin: 0;
    appearance: none;
    background: none;
}

.slider input::-webkit-slider-runnable-track {
    height: 9px;
    border-top: 2px solid #777;
    border-left: 1px solid #777;
}

.range-date::-webkit-slider-runnable-track {
    background: linear-gradient(90deg, #fff6e8, #f6c430 32%, #e51212 68%, #f0a0a0 85%, #fff);
}

.range-time::-webkit-slider-runnable-track {
    background: linear-gradient(90deg, #f8f8f8, #9cc0de 30%, #6d84f0 65%, #101020);
}

.slider input::-webkit-slider-thumb {
    appearance: none;
    width: 4px;
    height: 14px;
    margin-top: -4px;
    background: #f8f8f8;
    border-right: 1px solid #777;
}

.scale {
    display: flex;
    justify-content: space-between;
    font: bold 9px/14px "Liberation Sans", "Noto Sans CJK KR", sans-serif;
}

.months {
    padding: 0 3px;
}

/* 作業領域 */
.workspace {
    position: relative;
    flex: 1;
    min-height: 0;
    display: flex;
    background: var(--face);
}

.palette {
    width: 88px;
    align-self: flex-start;
    padding: 9px 2px 0;
    background: #f4f4f4;
    border-bottom: 1px solid #aaa;
    position: relative;
}

.palette::before {
    content: '';
    position: absolute;
    top: 3px;
    left: 3px;
    right: 3px;
    border-top: 2px dotted #bbb;
}

.palette-group {
    display: grid;
    grid-template-columns: 42px 42px;
}

.palette-group + .palette-group {
    margin-top: 2px;
    padding-top: 5px;
    border-top: 1px solid #888;
}

.viewport {
    flex: 1;
    min-width: 0;
    position: relative;
    border-left: 2px solid var(--dark);
    overflow: hidden;
}

.scene {
    display: block;
    width: 100%;
    height: 100%;
}

.keys {
    position: absolute;
    left: 1234px;
    bottom: 8px;
    display: flex;
    flex-direction: column;
    align-items: flex-start;
    gap: 26px;
}

.keys kbd {
    height: 46px;
    padding: 0 5px 0 3px;
    border-radius: 5px;
    background: #8b8b8b;
    box-shadow: 0 0 4px 2px rgba(120, 120, 120, .35);
    color: #fff;
    font: bold 29px/42px "DejaVu Sans", sans-serif;
}

.caption-strip {
    position: absolute;
    left: 0;
    bottom: 0;
    width: 1310px;
    height: 72px;
    background: rgba(0, 0, 0, .42);
}

/* トレイ */
.tray {
    width: 302px;
    border-left: 2px solid #fff;
    padding-left: 4px;
    display: flex;
    flex-direction: column;
}

.tray-title {
    height: 26px;
    padding: 0 4px 0 5px;
    display: flex;
    align-items: center;
    background: linear-gradient(#c0cede, #d5e1f0);
}

.tray-title h1 {
    flex: 1;
    font-size: 15px;
    line-height: 24px;
}

.pin svg {
    display: block;
    width: 9px;
    height: 10px;
}

.close {
    width: 12px;
    height: 12px;
    margin-left: 9px;
    background: #c75050;
    color: #fff;
    font: bold 10px/10px "Liberation Sans", sans-serif;
}

.tray-body {
    flex: 1;
    min-height: 0;
    display: flex;
}

.panels {
    flex: 1;
    min-width: 0;
    display: flex;
    flex-direction: column;
    border-right: 2px solid #fff;
}

.panel-head {
    height: 23px;
    flex: none;
    display: flex;
    align-items: center;
    padding: 0 2px 0 10px;
    background: linear-gradient(#e8e8e8, #b2b2b2);
    border-top: 1px solid #aaa;
    font-size: 16px;
    line-height: 20px;
}

.tri {
    margin-right: 8px;
    border: 5px solid transparent;
    border-top: 9px solid #000;
    border-bottom: 0;
}

.panel-head button {
    width: 16px;
    height: 16px;
    margin-left: auto;
    border: 1px solid var(--line);
    background: #e8e8e8;
    font: bold 13px/13px "Liberation Sans", sans-serif;
}

.entity {
    height: 181px;
    flex: none;
}

.entity-top {
    display: flex;
    justify-content: space-between;
    align-items: center;
    height: 33px;
    margin: 0 2px;
    padding: 0 5px 0 10px;
    border-bottom: 1px solid #aaa;
    font-size: 12px;
}

.mini svg {
    display: block;
    width: 12px;
    height: 18px;
}

.entity-main {
    display: flex;
    gap: 2px;
    padding: 8px 10px 0 7px;
}

.thumb {
    width: 35px;
    height: 60px;
    flex: none;
    padding-top: 12px;
    border: 1px solid var(--line);
    background: linear-gradient(#fff, #fff) 0 12px / 100% 33px no-repeat;
}

/* 前面と背面の三角 */
.thumb::before, .preview::before, .default::before {
    content: '';
    display: block;
    height: 33px;
    background: var(--slate);
    clip-path: polygon(0 0, 100% 100%, 0 100%);
}

.fields {
    flex: 1;
    display: grid;
    grid-template-columns: 1fr 118px;
    grid-auto-rows: 23px;
    gap: 5px;
    font-size: 13px;
    line-height: 22px;
    text-align: right;
}

.fields label {
    white-space: nowrap;
}

.combo {
    position: relative;
    display: block;
    border: 2px solid;
    border-color: #6e6e6e #d8d8d8 #fff #6e6e6e;
    background: #fff;
}

.combo::after {
    content: '';
    position: absolute;
    top: 0;
    right: 0;
    bottom: 0;
    width: 20px;
    background: #f0f0f0;
    border-right: 2px solid #777;
    border-bottom: 2px solid #777;
    pointer-events: none;
}

.combo::before {
    content: '';
    position: absolute;
    z-index: 1;
    top: 8px;
    right: 6px;
    border: 5px solid transparent;
    border-top-color: #000;
    border-bottom: 0;
    pointer-events: none;
}

.combo select {
    display: block;
    width: 100%;
    height: 100%;
    padding: 0 2px;
    border: 0;
    appearance: none;
    background: none;
    color: #111;
}

.fields select, .fields input {
    font-family: "DejaVu Sans", sans-serif;
    font-size: 12px;
}

.fields input, .material input {
    min-width: 0;
    height: 23px;
    padding: 0 2px;
    border: 2px solid;
    border-color: #777 #fff #fff #777;
    background: #f0f0f0;
}

.material {
    display: flex;
    gap: 3px;
    height: 93px;
    flex: none;
    padding: 2px 2px 0;
    border-bottom: 1px solid var(--line);
}

.preview {
    width: 77px;
    height: 87px;
    flex: none;
    padding-top: 5px;
    border: 1px solid #888;
    background: linear-gradient(#fff, #fff) 0 5px / 100% 75px no-repeat;
}

.preview::before {
    height: 75px;
}

.material input {
    width: 161px;
    flex: none;
    color: #888;
}

.material-side {
    flex: 1;
    display: flex;
    flex-direction: column;
    align-items: center;
    padding: 5px 0 0 2px;
}

.create svg {
    display: block;
    width: 22px;
    height: 22px;
    margin: 9px 0 6px;
}

.default {
    width: 26px;
    height: 26px;
    background: #fff;
}

.default::before {
    height: 26px;
}

.tabs {
    height: 31px;
    flex: none;
    display: flex;
    align-items: flex-end;
    padding-bottom: 1px;
}

.tab {
    width: 46px;
    height: 20px;
    padding-right: 12px;
    border-top: 1px solid #fff;
    border-right: 2px solid #777;
    line-height: 18px;
}

.tab.selected {
    width: 51px;
    height: 22px;
}

.dropper {
    margin: 0 4px 2px auto;
}

.dropper svg {
    display: block;
    width: 20px;
    height: 22px;
}

.browse {
    height: 36px;
    flex: none;
    display: flex;
    align-items: center;
    padding: 0 3px;
    padding-bottom: 3px;
    border-bottom: 1px solid var(--line);
}

.browse button {
    width: 28px;
}

.browse button:last-child {
    width: 22px;
    margin-left: 4px;
}

.browse svg {
    display: block;
    width: 20px;
    height: 20px;
    margin: 0 auto;
}

.browse .combo {
    flex: 1;
    height: 26px;
    margin: 6px 0 0 1px;
}

.browse .combo::before {
    top: 10px;
}

.underline select {
    background: linear-gradient(#000, #000) 3px 100% / 125px 1px no-repeat;
}

.list {
    flex: 1;
    min-height: 0;
    display: flex;
    overflow: hidden;
    background: #fff;
}

.swatches {
    display: grid;
    grid-template-columns: repeat(3, 62px);
    grid-auto-rows: 62px;
    gap: 2px;
    padding: 2px 3px;
}

.swatches button {
    padding: 1px;
    border: 1px solid var(--line);
    background-clip: content-box;
}

.red-1 { background-color: #fbcdcd; }
.red-2 { background-color: #f99b9b; }
.red-3 { background-color: #f46565; }
.red-4 { background-color: #f23535; }
.red-5 { background-color: #ec0505; }
.red-6 { background-color: #cc0004; }
.red-7 { background-color: #9a0004; }
.red-8 { background-color: #680004; }
.orange-1 { background-color: #fddbcd; }
.orange-2 { background-color: #f9b39b; }
.orange-3 { background-color: #f98f68; }
.orange-4 { background-color: #f66a35; }
.orange-5 { background-color: #f14205; }
.orange-6 { background-color: #cf3507; }
.orange-7 { background-color: #9a2807; }
.orange-8 { background-color: #681b04; }
.sand-1 { background-color: #fee7cf; }
.sand-2 { background-color: #fbcf9b; }

.folder svg {
    display: block;
    width: 38px;
    height: 40px;
    margin: 0 auto;
}

.scrollbar {
    width: 19px;
    flex: none;
    margin-left: auto;
    display: flex;
    flex-direction: column;
    align-items: stretch;
    background: #f0f0f0;
}

.scrollbar svg {
    width: 11px;
    height: 8px;
    margin: 7px auto 6px;
}

.scrollbar .end {
    margin-top: auto;
}

.knob {
    height: 21px;
    background: #cdcdcd;
}

.outer {
    width: 20px;
    padding-top: 1px;
}

.sub-head {
    height: 29px;
    flex: none;
    margin-top: 3px;
    padding: 0 5px;
    border-top: 3px double #777;
    border-bottom: 1px solid var(--line);
    background: linear-gradient(#f1f1f1 3px, #999 3px, #999 4px, #e4e3e5 4px);
    font-size: 12px;
    line-height: 26px;
}

.list.short {
    flex: none;
    height: 33px;
}

/* ステータスバー */
.status-bar {
    height: 27px;
    flex: none;
    display: flex;
    align-items: center;
    padding: 6px 5px 0 7px;
    background: var(--face);
    overflow: hidden;
}

.status-icon {
    width: 18px;
    height: 18px;
    flex: none;
    margin-right: 17px;
}

.status-bar p {
    margin-left: -5px;
    padding-left: 10px;
    border-left: 1px solid #888;
    font-size: 17px;
    line-height: 18px;
    white-space: nowrap;
}

.measure {
    margin-left: auto;
    display: flex;
    align-items: center;
    gap: 11px;
    padding-left: 11px;
    border-left: 1px solid #888;
    font-size: 16px;
    line-height: 14px;
}

.measure input {
    width: 250px;
    height: 23px;
    border: 1px solid #a8b8d0;
    background: var(--face);
}
```
